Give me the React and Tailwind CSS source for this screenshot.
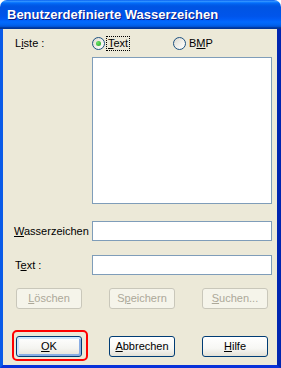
import React from "react";

function Radio({ checked }) {
  return (
    <span className="relative flex h-[13px] w-[13px] shrink-0 items-center justify-center rounded-full border border-[#1C5180] bg-[linear-gradient(135deg,#DCD9CF_0%,#F4F3EE_60%,#FFFFFF_100%)]">
      {checked ? (
        <span className="h-[5px] w-[5px] rounded-full bg-[radial-gradient(circle_at_35%_35%,#6BE36A_0%,#21A121_100%)]" />
      ) : null}
    </span>
  );
}

function XpButton({ children, disabled, isDefault }) {
  if (disabled) {
    return (
      <div className="flex h-[21px] w-[66px] items-center justify-center rounded-[3px] border border-[#C9C7BA] bg-[#F5F4EA] text-[#ACA899]">
        {children}
      </div>
    );
  }
  return (
    <div
      className={
        isDefault
          ? "flex h-[21px] w-[66px] items-center justify-center rounded-[3px] border border-[#003C74] bg-[linear-gradient(180deg,#FFFFFF_0%,#F4F4F0_60%,#E3E1D6_100%)] shadow-[inset_1px_1px_0_1px_#CEE7FF,inset_-1px_-1px_0_1px_#89ADE4]"
          : "flex h-[21px] w-[66px] items-center justify-center rounded-[3px] border border-[#003C74] bg-[linear-gradient(180deg,#FFFFFF_0%,#F7F7F4_60%,#E3E1D6_100%)]"
      }
    >
      {children}
    </div>
  );
}

export default function App() {
  return (
    <div className="flex h-[368px] w-[281px] flex-col bg-white font-['Liberation_Sans',Arial,sans-serif] text-[11px] leading-[13px] text-black">
      {/* Title bar */}
      <div className="flex h-[29px] shrink-0 items-center rounded-t-[7px] bg-[linear-gradient(180deg,#0058EE_0%,#3593FF_4%,#288EFF_6%,#127DFF_8%,#036FFC_10%,#0262EE_14%,#0057E5_20%,#0054E3_24%,#0055EB_56%,#005BF5_66%,#026AFE_76%,#0062EF_86%,#0052D6_92%,#0040AB_94%,#003092_100%)] pl-[7px]">
        <span className="text-[13px] font-bold leading-[16px] text-white [text-shadow:1px_1px_0_#0A1883]">
          Benutzerdefinierte Wasserzeichen
        </span>
      </div>

      {/* Body */}
      <div className="flex flex-1 flex-col border-b-[3px] border-l-[3px] border-r-[4px] border-b-[#0831D9] border-l-[#0A5BE8] border-r-[#0025B0] bg-[#ECE9D8]">
        <div className="mt-[8px] flex h-[13px] items-center">
          <div className="w-[89px] shrink-0 pl-[12px]">
            L<u>i</u>ste :
          </div>
          <div className="flex w-[81px] shrink-0 items-center gap-[1px]">
            <Radio checked />
            <span className="border border-dotted border-black px-[1px] leading-[13px]">
              <u>T</u>ext
            </span>
          </div>
          <div className="flex items-center gap-[3px]">
            <Radio />
            <span>
              B<u>M</u>P
            </span>
          </div>
        </div>

        <div className="ml-[89px] mt-[7px] h-[147px] w-[180px] border border-[#7F9DB9] bg-white" />

        <div className="mt-[17px] flex items-center">
          <div className="w-[89px] shrink-0 pl-[11px]">
            <u>W</u>asserzeichen
          </div>
          <div className="h-[20px] w-[180px] border border-[#7F9DB9] bg-white" />
        </div>

        <div className="mt-[14px] flex items-center">
          <div className="w-[89px] shrink-0 pl-[12px]">
            T<u>e</u>xt :
          </div>
          <div className="h-[20px] w-[180px] border border-[#7F9DB9] bg-white" />
        </div>

        <div className="mt-[13px] flex gap-[27px] pl-[13px]">
          <XpButton disabled>
            <span>
              <u>L</u>öschen
            </span>
          </XpButton>
          <XpButton disabled>
            <span>
              S<u>p</u>eichern
            </span>
          </XpButton>
          <XpButton disabled>
            <span>
              <u>S</u>uchen...
            </span>
          </XpButton>
        </div>

        <div className="mt-[27px] flex gap-[27px] pl-[13px]">
          <div className="relative">
            <XpButton isDefault>
              <span>
                <u>O</u>K
              </span>
            </XpButton>
            <div className="pointer-events-none absolute -bottom-[4px] -left-[4px] -right-[6px] -top-[6px] rounded-[5px] border-2 border-[#FF0000]" />
          </div>
          <XpButton>
            <span>
              <u>A</u>bbrechen
            </span>
          </XpButton>
          <XpButton>
            <span>
              <u>H</u>ilfe
            </span>
          </XpButton>
        </div>
      </div>
    </div>
  );
}
